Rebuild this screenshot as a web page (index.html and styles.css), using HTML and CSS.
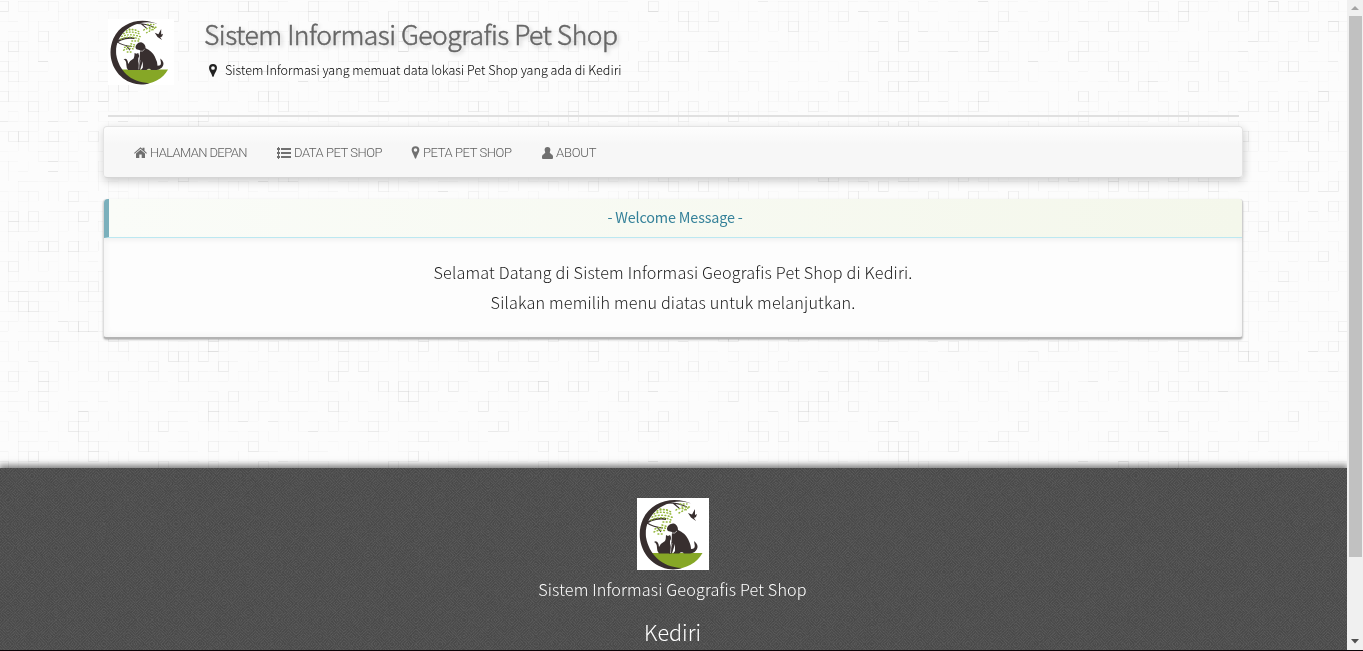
FILE: index.html
```
<!DOCTYPE html>
<html lang="id">
<head>
<meta charset="utf-8">
<title>Sistem Informasi Geografis Pet Shop</title>
<link rel="stylesheet" href="styles.css">
</head>
<body>
<svg class="defs" aria-hidden="true">
  <symbol id="logo" viewBox="0 0 72 72">
    <rect width="72" height="72" fill="#fff"/>
    <path d="M10 55H65.500C60 65 49 71 36 71C24 70 15 64 10 55Z" fill="#86a726"/>
    <path d="M57 7C39-3 15 2 6 21C-3 41 7 66 31 71C37 72 42 71 45 70C24 69 12 56 9 39C7 20 22 4 43 3.500Q51 3.500 57 7Z" fill="#382f2f"/>
    <path d="M6 28Q15 19 29 21" fill="none" stroke="#382f2f" stroke-width="1.800"/>
    <path d="M10 25Q16 29 26 30M20 29L24 34M27 5Q40 4 50 9M36 5L42 10" fill="none" stroke="#382f2f" stroke-width="1.100"/>
    <g fill="none" stroke="#94b73c" stroke-width="1.500" stroke-linecap="round" stroke-dasharray=".8 2.500">
      <path d="M20 13Q27 10 34 14M17 16Q25 12 36 17M15 19Q25 15 37 20M14 22Q25 17 36 23M23 11L31 12M26 24L34 24"/>
      <path d="M18 31Q24 28 30 31M17 34Q23 31 29 33M21 36L26 36M25 27L31 29"/>
      <path d="M39 12Q43 9 50 12M42 15L51 10M43 6L50 6M45 9L53 9"/>
    </g>
    <path d="M51 15L55 16.500 58 11 58 17 60 16 59 19 57 20 59 23 54 19.500Z" fill="#382f2f"/>
    <path d="M31 28Q33 25 37 25.500Q41 27 41 32Q48 35 51 41Q54 47 54 51Q59 51 57.500 46L57 43Q62 47 60 51Q58 55 53 55.500L47 55.500Q45 53 42 55.500H36L38 53V46L35 55.500H32Q33 48 34.500 44L35 34L31 33Q29 31 31 28Z" fill="#382f2f"/>
    <path d="M29 37L31 38 33 37Q35 40 33 43L33 55.500H22Q20 54 20 50Q20 45 17 44Q20 42 21.500 46L22 49Q24 45 28 43Q29 41 29 37Z" fill="#382f2f"/>
    <path d="M34.500 35Q38 36 40 33M35 45Q33.500 51 33.500 55" fill="none" stroke="#fff" stroke-width=".6"/>
  </symbol>
  <symbol id="pin" viewBox="0 0 10 14"><path fill-rule="evenodd" d="M5 0A4.300 4.300 0 0 0 .7 4.300C.7 7 3.500 10 4.200 13.200Q5 14.600 5.800 13.200C6.500 10 9.300 7 9.300 4.300A4.300 4.300 0 0 0 5 0ZM5 2.300A2 2 0 1 1 5 6.300A2 2 0 0 1 5 2.300Z"/></symbol>
  <symbol id="home" viewBox="0 0 13 11"><path d="M0 6L6.500 .2L8.500 2V.8H10.500V3.700L13 6L12.300 6.800L6.500 1.800L.7 6.800ZM2 6.500L6.500 2.700L11 6.500V11H7.700V7.600H5.300V11H2Z"/></symbol>
  <symbol id="list" viewBox="0 0 14 12"><path d="M0 1H3V3H0ZM0 5H3V7H0ZM0 9H3V11H0ZM1 0H2V12H1ZM4 1H14V3H4ZM4 5H14V7H4ZM4 9H14V11H4Z"/></symbol>
  <symbol id="user" viewBox="0 0 11 12"><path d="M5.500 0Q8.400 0 8.400 3L7.700 5.500L9 7Q11 7.500 11 9.500V11Q11 12 10 12H1Q0 12 0 11V9.500Q0 7.500 2 7L3.300 5.500L2.600 3Q2.600 0 5.500 0Z"/></symbol>
</svg>
<div class="screen">
  <div class="page">
    <canvas class="texture" id="texture" width="1347" height="651"></canvas>
    <div class="container">
      <header class="header">
        <svg class="header-logo"><use href="#logo"/></svg>
        <div>
          <h1 class="title">Sistem Informasi Geografis Pet Shop</h1>
          <p class="tagline"><svg class="tag-pin"><use href="#pin"/></svg><span>Sistem Informasi yang memuat data lokasi Pet Shop yang ada di Kediri</span></p>
        </div>
      </header>
      <hr class="rule">
      <nav class="nav">
        <a class="nav-item"><svg class="i-home"><use href="#home"/></svg><span class="n1">HALAMAN DEPAN</span></a>
        <a class="nav-item"><svg class="i-list"><use href="#list"/></svg><span class="n2">DATA PET SHOP</span></a>
        <a class="nav-item"><svg class="i-pin"><use href="#pin"/></svg><span class="n3">PETA PET SHOP</span></a>
        <a class="nav-item"><svg class="i-user"><use href="#user"/></svg><span class="n4">ABOUT</span></a>
      </nav>
      <section class="panel">
        <h2 class="panel-title">- Welcome Message -</h2>
        <div class="panel-body">
          <p>Selamat Datang di Sistem Informasi Geografis Pet Shop di Kediri.</p>
          <p>Silakan memilih menu diatas untuk melanjutkan.</p>
        </div>
      </section>
    </div>
    <footer class="footer">
      <canvas class="weave" id="weave" width="1347" height="183"></canvas>
      <svg class="footer-logo"><use href="#logo"/></svg>
      <p class="footer-name">Sistem Informasi Geografis Pet Shop</p>
      <p class="footer-city">Kediri</p>
    </footer>
  </div>
  <div class="scrollbar">
    <svg class="arrow" viewBox="0 0 16 16"><path d="M4 10L8 6L12 10Z" fill="#a3a3a3"/></svg>
    <div class="thumb"></div>
    <svg class="arrow arrow-down" viewBox="0 0 16 16"><path d="M4 5H12L8 9.500Z" fill="#505050"/></svg>
  </div>
</div>
<script src="texture.js"></script>
</body>
</html>
```
FILE: texture.js
```
// Seeded generator keeps both textures identical between loads.
var seed = 7;
function rnd() { seed = (seed * 16807) % 2147483647; return seed / 2147483647; }

// Tiled paper: faint 10px squares with occasional darker edges.
var c = document.getElementById('texture').getContext('2d');
c.fillStyle = '#fcfcfc';
c.fillRect(0, 0, 1347, 651);
for (var y = 0; y < 48; y++) {
  for (var x = 0; x < 136; x++) {
    var px = x * 10 - 2, py = y * 10 + 1;
    var a = rnd(), b = rnd();
    if (a > 0.3) { c.fillStyle = 'rgba(0,0,0,' + (rnd() * 0.03) + ')'; c.fillRect(px, py, 10, 1); }
    if (b > 0.3) { c.fillStyle = 'rgba(0,0,0,' + (rnd() * 0.03) + ')'; c.fillRect(px, py, 1, 10); }
    if (a < 0.08) { c.strokeStyle = 'rgba(0,0,0,.04)'; c.strokeRect(px + 0.5, py + 0.5, 10, 10); }
    if (b < 0.02) { c.fillStyle = 'rgba(0,0,0,.06)'; c.fillRect(px, py, 10, 1); }
  }
}

// Dark denim: diagonal threads with small brightness changes.
var w = document.getElementById('weave').getContext('2d');
for (var v = 0; v < 183; v++) {
  for (var u = 0; u < 1347; u++) {
    var d = ((u >> 3) + (v >> 3)) % 2 ? (u + v) % 3 : (u - v + 300) % 3;
    var g = Math.round(72 + (d === 0 ? 10 : 0) + rnd() * 9);
    w.fillStyle = 'rgb(' + g + ',' + g + ',' + g + ')';
    w.fillRect(u, v, 1, 1);
  }
}
```
FILE: styles.css
```
* { box-sizing: border-box; }
body { margin: 0; overflow: hidden; font-family: "Noto Sans CJK JP", "Noto Sans CJK SC", sans-serif; font-weight: 300; color: #222; }
h1, h2, p { margin: 0; font-weight: 300; white-space: nowrap; }
.defs { position: absolute; width: 0; height: 0; }
.screen { display: flex; width: 1363px; height: 651px; border-bottom: 1px solid #0c0508; }
.page { position: relative; width: 1347px; height: 650px; overflow: hidden; display: flex; flex-direction: column; }
.texture { position: absolute; inset: 0; }
.container { position: relative; width: 1140px; height: 468px; margin-left: 103px; flex: none; }
.header { display: flex; height: 115px; padding: 19px 0 0 5px; }
.header-logo { width: 66px; height: 66px; margin-right: 30px; flex: none; }
.title { height: 32px; line-height: 29px; font-size: 26.5px; font-weight: 300; letter-spacing: -0.5px; color: #666; -webkit-text-stroke: 0.5px #666; text-shadow: 2px 2px 4px rgba(0,0,0,.25); }
.tagline { display: flex; align-items: center; height: 20px; margin: 9px 0 0 4px; line-height: 20px; font-size: 12.6px; letter-spacing: -0.01px; color: #000; }
.tag-pin { width: 10px; height: 13px; margin-right: 7px; fill: #222; }
.rule { height: 2px; margin: 0 4px 0 5px; border: 0; background: #e0e0e0; }
.nav { display: flex; align-items: center; gap: 30px; height: 52px; margin-top: 9px; padding-left: 30px; background: linear-gradient(#fdfdfd, #f7f7f7 35%); border: 1px solid #e3e3e3; border-bottom-color: #d5d5d5; border-radius: 4px; box-shadow: 1px 3px 8px rgba(0,0,0,.2); }
.nav-item { display: flex; align-items: center; gap: 3px; padding-top: 1px; font: 300 13px/18px Roboto, sans-serif; color: #606060; fill: #707070; white-space: nowrap; }
.n1 { width: 97px; letter-spacing: -0.62px; }
.n2 { width: 87px; letter-spacing: -0.47px; }
.n3 { width: 89px; letter-spacing: -0.42px; }
.n4 { letter-spacing: -0.2px; }
.i-home { width: 13px; height: 11px; }
.i-list { width: 14px; height: 12px; }
.i-pin { width: 9px; height: 13px; }
.i-user { width: 11px; height: 12px; }
.panel { height: 140px; margin-top: 21px; background: #fdfdfd; border: 1px solid #d3d3d3; border-top: 0; border-left-color: #ddd; border-bottom: 2px solid #b3b3b3; border-radius: 4px; box-shadow: 0 1px 2px rgba(0,0,0,.25), inset 0 0 8px rgba(0,0,0,.06); }
.panel-title { height: 39px; line-height: 36px; padding-right: 1px; text-align: center; font-size: 14.4px; font-weight: 400; letter-spacing: -0.17px; color: #348199; background: linear-gradient(90deg, #fafcf8, #f4f7eb); border-left: 5px solid #7bb0bc; border-bottom: 1px solid #bce8f1; border-radius: 4px 3px 0 0; box-shadow: 0 2px 5px rgba(0,0,0,.06); }
.panel-body { padding-top: 19px; text-align: center; font-size: 16.2px; line-height: 30px; letter-spacing: 0.17px; }
.footer { position: relative; flex: 1; display: flex; flex-direction: column; align-items: center; padding: 30px 2px 0 0; background: #505050; box-shadow: 0 -2px 6px 1px rgba(0,0,0,.5); color: #fff; }
.weave { position: absolute; inset: 0; }
.footer-logo { position: relative; width: 72px; height: 72px; flex: none; }
.footer-name { position: relative; margin-top: 5px; line-height: 29px; font-size: 16.2px; letter-spacing: 0.15px; }
.footer-city { position: relative; margin-top: 12px; line-height: 31px; font-size: 21.6px; }
.scrollbar { width: 16px; height: 650px; background: #f0f0f0; display: flex; flex-direction: column; }
.arrow { width: 16px; height: 16px; }
.thumb { width: 13px; height: 541px; margin-left: 2px; background: #c1c1c1; }
.arrow-down { margin-top: auto; }
```
